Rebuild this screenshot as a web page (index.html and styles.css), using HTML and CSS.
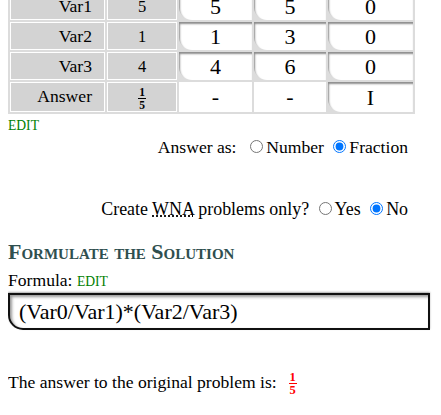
FILE: index.html
```html
<!DOCTYPE html>
<html>
<head>
<meta charset="utf-8">
<link rel="stylesheet" href="styles.css">
</head>
<body>
<table class="vars">
  <colgroup><col class="c1"><col class="c2"><col class="c3"><col class="c4"><col class="c5"></colgroup>
  <tr>
    <td class="lbl">Var1</td><td class="val">5</td>
    <td class="in"><div class="box">5</div></td><td class="in"><div class="box">5</div></td><td class="in"><div class="box">0</div></td>
  </tr>
  <tr>
    <td class="lbl">Var2</td><td class="val">1</td>
    <td class="in"><div class="box">1</div></td><td class="in"><div class="box">3</div></td><td class="in"><div class="box">0</div></td>
  </tr>
  <tr>
    <td class="lbl">Var3</td><td class="val">4</td>
    <td class="in"><div class="box">4</div></td><td class="in"><div class="box">6</div></td><td class="in"><div class="box">0</div></td>
  </tr>
  <tr class="last">
    <td class="lbl">Answer</td><td class="val"><span class="frac"><span class="num">1</span><span class="den">5</span></span></td>
    <td class="blank">-</td><td class="blank">-</td><td class="in"><div class="box">I</div></td>
  </tr>
</table>
<div class="edit">EDIT</div>
<div class="options">
  <p class="opt">Answer as:&nbsp; <input type="radio" name="ans"><label>Number</label> <input type="radio" name="ans" checked><label>Fraction</label></p>
  <p class="opt wide">Create <abbr title="Whole Number Answer">WNA</abbr> problems only? <input type="radio" name="wna"><label>Yes</label> <input type="radio" name="wna" checked><label>No</label></p>
</div>
<h2 class="heading">Formulate the Solution</h2>
<div class="flabel">Formula: <span class="edit-inline">EDIT</span></div>
<div class="formula">(Var0/Var1)*(Var2/Var3)</div>
<p class="answer">The answer to the original problem is:&nbsp; <span class="frac red"><span class="num">1</span><span class="den">5</span></span></p>
</body>
</html>
```
FILE: styles.css
```css
html, body {
  background: #fff;
}
body {
  margin: 0 8px;
  font-family: "Liberation Serif", "Times New Roman", serif;
  font-size: 17.6px;
  color: #000;
}
.vars {
  margin-top: -10px;
  border-spacing: 2px;
  background: #dcdcdc;
  table-layout: fixed;
  width: 407px;
}
.c1 { width: 95px; }
.c2 { width: 70px; }
.c3 { width: 73px; }
.c4 { width: 72px; }
.c5 { width: 85px; }
.vars td {
  padding: 0;
  vertical-align: middle;
}
.lbl {
  background: #d3d3d3;
  border: 1px solid #fff;
  text-align: right;
  padding-right: 12px !important;
  line-height: 26px;
}
.val {
  background: #d3d3d3;
  border: 1px solid #fff;
  text-align: center;
  font-size: 16.5px;
  line-height: 25px;
  padding-top: 1px !important;
}
.last .lbl { padding-bottom: 2px !important; }
.last .val { padding-top: 0 !important; line-height: 28px; }
.box {
  box-sizing: border-box;
  height: 28px;
  padding-top: 1px;
  line-height: 27px;
  font-size: 22px;
  text-align: center;
  background: #fff;
  border-bottom-left-radius: 13px;
  box-shadow: inset 1px 2px 2px rgba(0, 0, 0, 0.45);
}
.last .box { height: 30px; line-height: 29px; }
.blank {
  background: #fff;
  font-size: 22px;
  text-align: center;
  line-height: 28px;
}
.frac {
  display: inline-flex;
  flex-direction: column;
  vertical-align: middle;
  font-size: 11.5px;
  font-weight: bold;
  line-height: 10px;
  text-align: center;
}
.frac .num {
  border-bottom: 1px solid currentColor;
  padding: 0 1px 1px;
}
.frac .den {
  padding-top: 1px;
}
.frac.red {
  color: #f00;
  font-size: 12.5px;
  line-height: 10.5px;
  margin-left: 3px;
}
.edit {
  color: #008000;
  font-size: 13.6px;
  line-height: 16px;
  margin-top: 4px;
}
.options {
  width: 400px;
  text-align: right;
  margin-top: 2.5px;
}
.opt {
  margin: 0;
  line-height: 20px;
}
.opt input {
  width: 13px;
  height: 13px;
}
.opt + .opt {
  margin-top: 42px;
}
.opt.wide {
  font-size: 17.9px;
}
.heading {
  margin: 20px 0 0;
  font-size: 22px;
  line-height: 26px;
  font-variant: small-caps;
  font-weight: bold;
  color: #2f4f4f;
}
.flabel {
  margin-top: 5px;
  line-height: 20px;
}
.edit-inline {
  color: #008000;
  font-size: 13.6px;
}
.formula {
  box-sizing: border-box;
  width: 422px;
  margin-top: 1px;
  height: 37px;
  border: 2px solid #111;
  border-bottom-left-radius: 15px;
  padding: 0 9px;
  font-size: 22px;
  line-height: 33px;
  box-shadow: inset 2px 2px 3px #999, 0 -1px 2px #aaa;
}
.answer {
  margin: 42px 0 0;
  line-height: 20px;
}
```
